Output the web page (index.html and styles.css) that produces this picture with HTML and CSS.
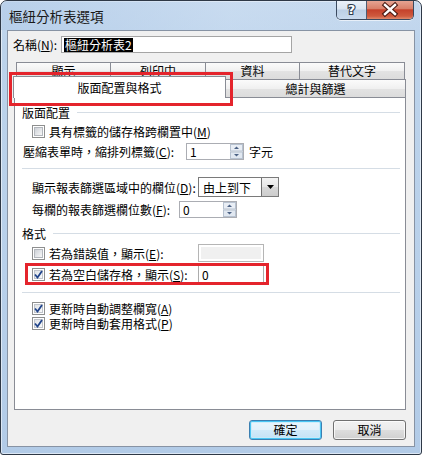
FILE: index.html
```html
<!DOCTYPE html>
<html lang="zh-Hant">
<head>
<meta charset="utf-8">
<title>樞紐分析表選項</title>
<link rel="stylesheet" href="styles.css">
</head>
<body>
<div class="window">
  <div class="titlebar">
    <div class="title">樞紐分析表選項</div>
    <div class="caption">
      <div class="cap-help">
        <svg width="29" height="19" viewBox="0 0 29 19"><text x="14.5" y="14" text-anchor="middle" font-family="DejaVu Sans, sans-serif" font-size="13" font-weight="bold" fill="#fff" stroke="#2d3a4e" stroke-width="2.2" paint-order="stroke">?</text></svg>
      </div>
      <div class="cap-close">
        <svg width="46" height="19" viewBox="0 0 46 19"><path d="M18 5 L28 14 M28 5 L18 14" stroke="#4a1a12" stroke-width="4.6" stroke-linecap="square"/><path d="M18 5 L28 14 M28 5 L18 14" stroke="#fff" stroke-width="2.4" stroke-linecap="square"/></svg>
      </div>
    </div>
  </div>
  <div class="client">
    <div class="name-row">
      <span class="name-lbl">名稱(<u>N</u>):</span>
      <div class="name-input"><span class="sel">樞紐分析表2</span></div>
    </div>
    <div class="tabs">
      <div class="tab-row back">
        <div class="tab t1">顯示</div>
        <div class="tab t2">列印中</div>
        <div class="tab t3">資料</div>
        <div class="tab t4">替代文字</div>
      </div>
      <div class="tab-row front">
        <div class="tab active">版面配置與格式</div>
        <div class="tab t5">總計與篩選</div>
      </div>
    </div>
    <div class="panel">
      <div class="heading h1"><span>版面配置</span><i class="hline"></i></div>
      <div class="row r-m"><span class="cb"><span class="cb-in"></span></span><span>具有標籤的儲存格跨欄置中(<u>M</u>)</span></div>
      <div class="row r-c">
        <span class="lbl lbl-c">壓縮表單時，縮排列標籤(<u>C</u>):</span>
        <div class="spin w58"><span class="val">1</span><svg class="spinbtn" width="13" height="15" viewBox="0 0 13 15"><rect x="0.5" y="0.5" width="12" height="6.5" fill="#e9eef5" stroke="#b7c2d0"/><rect x="0.5" y="8" width="12" height="6.5" fill="#e1e8f1" stroke="#b7c2d0"/><path d="M4 5 L6.5 2.5 L9 5 Z" fill="#4c6285"/><path d="M4 10 L6.5 12.5 L9 10 Z" fill="#4c6285"/></svg></div>
        <span class="unit">字元</span>
      </div>
      <div class="sep s1"></div>
      <div class="row r-d">
        <span class="lbl lbl-d">顯示報表篩選區域中的欄位(<u>D</u>):</span>
        <div class="combo"><span class="val">由上到下</span><span class="combo-btn"><svg width="7" height="4" viewBox="0 0 7 4"><path d="M0 0 L7 0 L3.5 4 Z" fill="#000"/></svg></span></div>
      </div>
      <div class="row r-f">
        <span class="lbl lbl-f">每欄的報表篩選欄位數(<u>F</u>):</span>
        <div class="spin w58"><span class="val">0</span><svg class="spinbtn" width="13" height="15" viewBox="0 0 13 15"><rect x="0.5" y="0.5" width="12" height="6.5" fill="#e9eef5" stroke="#b7c2d0"/><rect x="0.5" y="8" width="12" height="6.5" fill="#e1e8f1" stroke="#b7c2d0"/><path d="M4 5 L6.5 2.5 L9 5 Z" fill="#4c6285"/><path d="M4 10 L6.5 12.5 L9 10 Z" fill="#4c6285"/></svg></div>
      </div>
      <div class="heading h2"><span>格式</span><i class="hline"></i></div>
      <div class="row r-e">
        <span class="cb"><span class="cb-in"></span></span>
        <span class="lbl lbl-e">若為錯誤值，顯示(<u>E</u>):</span>
        <div class="txt disabled"></div>
      </div>
      <div class="row r-s">
        <span class="cb checked"><span class="cb-in"><svg width="9" height="9" viewBox="0 0 9 9"><path d="M1 4.5 L3.5 7.5 L8 1" fill="none" stroke="#22458b" stroke-width="1.8"/></svg></span></span>
        <span class="lbl lbl-e">若為空白儲存格，顯示(<u>S</u>):</span>
        <div class="txt"><span class="val">0</span></div>
      </div>
      <div class="sep s2"></div>
      <div class="row r-a">
        <span class="cb checked"><span class="cb-in"><svg width="9" height="9" viewBox="0 0 9 9"><path d="M1 4.5 L3.5 7.5 L8 1" fill="none" stroke="#22458b" stroke-width="1.8"/></svg></span></span>
        <span>更新時自動調整欄寬(<u>A</u>)</span>
      </div>
      <div class="row r-p">
        <span class="cb checked"><span class="cb-in"><svg width="9" height="9" viewBox="0 0 9 9"><path d="M1 4.5 L3.5 7.5 L8 1" fill="none" stroke="#22458b" stroke-width="1.8"/></svg></span></span>
        <span>更新時自動套用格式(<u>P</u>)</span>
      </div>
    </div>
    <div class="buttons">
      <div class="btn default">確定</div>
      <div class="btn">取消</div>
    </div>
    <div class="hl hl-tab"></div>
    <div class="hl hl-blank"></div>
  </div>
</div>
</body>
</html>
```
FILE: styles.css
```css
html, body {
  margin: 0;
  padding: 0;
  background: #fff;
}
body {
  font-family: "Noto Sans CJK TC", "Liberation Sans", sans-serif;
  font-size: 12px;
  color: #000;
}
u { text-decoration: underline; text-underline-offset: 1px; }

.window {
  width: 422px;
  height: 455px;
  box-sizing: border-box;
  border: 1px solid #2e3846;
  border-radius: 7px 7px 3px 3px;
  background: linear-gradient(180deg, #c4d8ee 0%, #bcd3eb 10%, #b8d0ea 60%, #b2cbe7 100%);
  box-shadow: inset 0 0 0 1px rgba(255,255,255,0.55);
  padding: 0 6px 7px 6px;
  display: flex;
  flex-direction: column;
  overflow: hidden;
}

.titlebar {
  height: 29px;
  display: flex;
  align-items: flex-start;
  justify-content: space-between;
  margin: 0 -6px;
  padding: 0 7px 0 8px;
  background: linear-gradient(90deg, rgba(178,203,232,0.6) 0%, rgba(210,226,244,0.35) 55%, rgba(200,218,240,0.2) 100%);
}
.title {
  margin-top: 6px;
  font-size: 13.5px;
  line-height: 18px;
  color: #1a1a1a;
}
.caption {
  display: flex;
  margin-top: -1px;
  border: 1px solid #3b4a60;
  border-top: none;
  border-radius: 0 0 5px 5px;
  overflow: hidden;
  height: 19px;
  box-shadow: 0 1px 0 rgba(255,255,255,0.6);
}
.cap-help {
  width: 29px;
  height: 19px;
  background: linear-gradient(180deg, #edf3fa 0%, #d9e4f1 48%, #bccfe5 52%, #c9daee 100%);
  border-right: 1px solid #4d5d74;
}
.cap-close {
  width: 46px;
  height: 19px;
  background: linear-gradient(180deg, #e8a898 0%, #d9806a 45%, #c5412b 52%, #cf5a3e 85%, #e08a6c 100%);
}
.cap-help svg, .cap-close svg { display: block; }

.client {
  flex: 1;
  position: relative;
  background: #f0f0f0;
  border: 1px solid #8793a4;
  display: flex;
  flex-direction: column;
}

.name-row {
  margin-top: 5px;
  height: 17px;
  display: flex;
  align-items: center;
  padding-left: 5px;
}
.name-lbl { width: 48px; white-space: nowrap; }
.name-input {
  width: 231px;
  height: 17px;
  box-sizing: border-box;
  border: 1px solid #a5a5a5;
  background: #fff;
  padding-left: 2px;
  display: flex;
  align-items: center;
}
.sel {
  background: #000;
  color: #fff;
  line-height: 14px;
  padding: 0 1px;
}

.tabs { margin-top: 9px; }
.tab-row { display: flex; }
.tab-row.back { height: 17px; margin-left: 8px; }
.tab-row.front { height: 18px; margin-left: 5px; align-items: flex-end; }
.tab {
  box-sizing: border-box;
  border: 1px solid #898c95;
  border-bottom: none;
  margin-right: -1px;
  background: linear-gradient(180deg, #fbfbfb 0%, #f0f0f0 50%, #e3e3e3 51%, #dcdcdc 100%);
  text-align: center;
  white-space: nowrap;
}
.back .tab { height: 17px; line-height: 16px; }
.t1 { width: 95px; }
.t2 { width: 96px; }
.t3 { width: 95px; }
.t4 { width: 106px; }
.t5 { width: 181px; height: 18px; line-height: 17px; }
.tab.active {
  width: 213px;
  height: 22px;
  margin-bottom: -1px;
  line-height: 21px;
  background: #fff;
  position: relative;
  z-index: 1;
}

.panel {
  margin-left: 6px;
  width: 392px;
  height: 313px;
  box-sizing: border-box;
  border: 1px solid #898c95;
  background: #fff;
  padding: 0 5px 0 7px;
  display: flex;
  flex-direction: column;
}
.heading {
  height: 16px;
  display: flex;
  align-items: center;
  white-space: nowrap;
}
.hline {
  flex: 1;
  height: 1px;
  background: #d5dde5;
  margin-left: 7px;
}
.h1 { margin-top: 6px; }
.h2 { margin-top: 7px; }
.sep { height: 1px; background: #d5dde5; }
.s1 { margin-top: 8px; }
.s2 { margin-top: 9px; }

.row {
  display: flex;
  align-items: center;
  white-space: nowrap;
}
.r-m { margin-top: 3px; height: 16px; padding-left: 10px; }
.r-c { margin-top: 4px; height: 17px; padding-left: 1px; }
.r-d { margin-top: 8px; height: 20px; padding-left: 10px; }
.r-f { margin-top: 4px; height: 17px; padding-left: 10px; }
.r-e { margin-top: 3px; height: 18px; padding-left: 10px; }
.r-s { margin-top: 3px; height: 18px; padding-left: 10px; }
.r-a { margin-top: 7px; height: 16px; padding-left: 10px; }
.r-p { height: 15px; padding-left: 10px; }

.lbl { display: inline-block; }
.lbl-c { width: 163px; }
.lbl-d { width: 166px; }
.lbl-f { width: 147px; }
.lbl-e { width: 149px; }

.cb {
  width: 13px;
  height: 13px;
  box-sizing: border-box;
  border: 1px solid #8e8f8f;
  background: #fff;
  padding: 1px;
  margin-right: 4px;
  flex: none;
}
.cb-in {
  display: flex;
  align-items: center;
  justify-content: center;
  width: 9px;
  height: 9px;
  box-sizing: border-box;
  border: 1px solid #b3b7bd;
  background: linear-gradient(135deg, #cdd1d7 0%, #e4e6e9 55%, #f7f7f7 100%);
}
.cb.checked .cb-in {
  border-color: #c0c4ca;
  background: linear-gradient(135deg, #dfe2e6 0%, #eef0f2 60%, #fafafa 100%);
}
.cb-in svg { display: block; flex: none; margin: -1px; }

.spin {
  height: 17px;
  box-sizing: border-box;
  border: 1px solid #abadb3;
  background: #fff;
  display: flex;
  align-items: center;
  justify-content: space-between;
  padding-left: 3px;
}
.w58 { width: 58px; }
.spinbtn { display: block; margin-right: 0; }
.unit { margin-left: 5px; }

.combo {
  width: 81px;
  height: 20px;
  box-sizing: border-box;
  border: 1px solid #7a7a7a;
  background: #fff;
  display: flex;
  align-items: center;
  justify-content: space-between;
  padding-left: 4px;
}
.combo-btn {
  width: 17px;
  height: 18px;
  box-sizing: border-box;
  border-left: 1px solid #707070;
  background: linear-gradient(180deg, #f3f3f3 0%, #e6e6e6 50%, #d7d7d7 51%, #cdcdcd 100%);
  display: flex;
  align-items: center;
  justify-content: center;
}
.combo-btn svg { display: block; }

.txt {
  width: 66px;
  height: 18px;
  box-sizing: border-box;
  border: 1px solid #acacac;
  background: #fff;
  display: flex;
  align-items: center;
  padding-left: 3px;
}
.txt.disabled {
  background: #f0f0f0;
  box-shadow: inset 0 0 0 2px #fff;
  border-color: #b5b5b5;
}

.buttons {
  margin-top: 10px;
  height: 20px;
  display: flex;
  justify-content: flex-end;
  gap: 11px;
  padding-right: 8px;
}
.btn {
  width: 73px;
  height: 20px;
  box-sizing: border-box;
  border: 1px solid #707070;
  border-radius: 3px;
  background: linear-gradient(180deg, #f2f2f2 0%, #ebebeb 48%, #dddddd 52%, #cfcfcf 100%);
  box-shadow: inset 0 0 0 1px rgba(255,255,255,0.75);
  text-align: center;
  line-height: 18px;
}
.btn.default {
  border-color: #3c7fb1;
  box-shadow: inset 0 0 0 1px #4ac6f4, inset 0 0 0 2px rgba(200,235,250,0.8);
  background: linear-gradient(180deg, #eaf6fd 0%, #e2f1fb 48%, #d1eaf9 52%, #c3e1f5 100%);
}

.hl {
  position: absolute;
  box-sizing: border-box;
  border: 3px solid #e4242c;
  z-index: 5;
}
.hl-tab { left: 1px; top: 41px; width: 224px; height: 34px; }
.hl-blank { left: 17px; top: 232px; width: 244px; height: 22px; }
```
